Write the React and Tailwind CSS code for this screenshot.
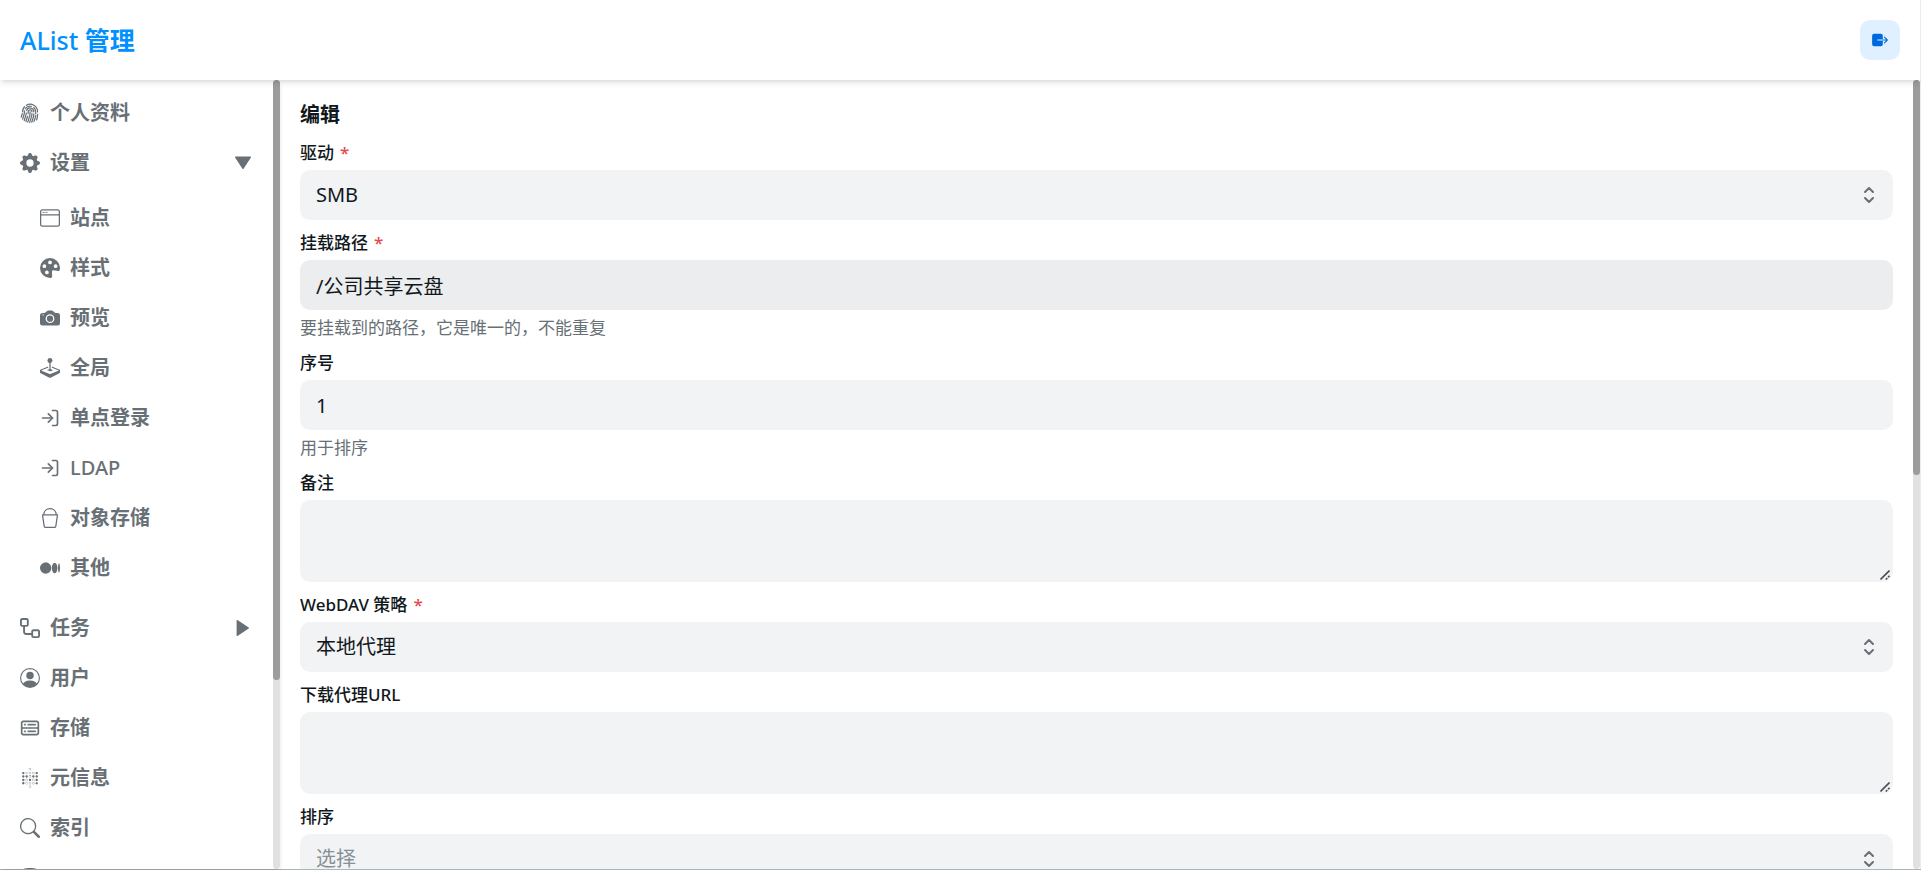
import {
  BsBucket,
  BsCameraFill,
  BsFingerprint,
  BsGearFill,
  BsJoystick,
  BsMedium,
  BsPaletteFill,
  BsPersonCircle,
  BsSearch,
  BsWindow,
} from "react-icons/bs";
import { CgDatabase } from "react-icons/cg";
import { FaDatabase } from "react-icons/fa";
import { FiLogIn } from "react-icons/fi";
import { IoExit } from "react-icons/io5";
import { SiMetabase } from "react-icons/si";
import { TbSelector } from "react-icons/tb";

const WorkflowIcon = ({ size, className }) => (
  <svg
    viewBox="0 0 16 16"
    width={size}
    height={size}
    className={className}
    fill="currentColor"
    aria-hidden="true"
  >
    <path d="M0 1.75C0 .784.784 0 1.75 0h3.5C6.216 0 7 .784 7 1.75v3.5A1.75 1.75 0 0 1 5.25 7H4v4a1 1 0 0 0 1 1h4v-1.25C9 9.784 9.784 9 10.75 9h3.5c.966 0 1.75.784 1.75 1.75v3.5A1.75 1.75 0 0 1 14.25 16h-3.5A1.75 1.75 0 0 1 9 14.25v-.75H5A2.5 2.5 0 0 1 2.5 11V7h-.75A1.75 1.75 0 0 1 0 5.25Zm1.75-.25a.25.25 0 0 0-.25.25v3.5c0 .138.112.25.25.25h3.5a.25.25 0 0 0 .25-.25v-3.5a.25.25 0 0 0-.25-.25Zm9 9a.25.25 0 0 0-.25.25v3.5c0 .138.112.25.25.25h3.5a.25.25 0 0 0 .25-.25v-3.5a.25.25 0 0 0-.25-.25Z" />
  </svg>
);

const Caret = ({ open }) => (
  <svg
    viewBox="0 0 16 16"
    className={`size-4 ${open ? "" : "-rotate-90"}`}
    fill="currentColor"
    aria-hidden="true"
  >
    <path d="M.6 1.6h14.8c.6 0 .8.5.5.9L8.6 13.7c-.3.4-.9.4-1.2 0L.1 2.5c-.3-.4-.1-.9.5-.9z" />
  </svg>
);

const menu = [
  { title: "个人资料", icon: BsFingerprint },
  {
    title: "设置",
    icon: BsGearFill,
    open: true,
    children: [
      { title: "站点", icon: BsWindow },
      { title: "样式", icon: BsPaletteFill },
      { title: "预览", icon: BsCameraFill },
      { title: "全局", icon: BsJoystick },
      { title: "单点登录", icon: FiLogIn },
      { title: "LDAP", icon: FiLogIn, latin: true },
      { title: "对象存储", icon: BsBucket },
      { title: "其他", icon: BsMedium },
    ],
  },
  { title: "任务", icon: WorkflowIcon, children: [] },
  { title: "用户", icon: BsPersonCircle },
  { title: "存储", icon: CgDatabase },
  { title: "元信息", icon: SiMetabase },
  { title: "索引", icon: BsSearch },
  { title: "备份", icon: FaDatabase, iconOnly: true },
];

const fields = [
  { id: "driver", label: "驱动", type: "select", value: "SMB", required: true },
  {
    id: "mount_path",
    label: "挂载路径",
    type: "text",
    value: "/公司共享云盘",
    required: true,
    help: "要挂载到的路径，它是唯一的，不能重复",
    active: true,
  },
  { id: "order", label: "序号", type: "text", value: "1", help: "用于排序" },
  { id: "remark", label: "备注", type: "textarea" },
  {
    id: "webdav_policy",
    label: "WebDAV 策略",
    type: "select",
    value: "本地代理",
    required: true,
  },
  { id: "down_proxy_url", label: "下载代理URL", type: "textarea" },
  { id: "order_by", label: "排序", type: "select", placeholder: "选择" },
];

const MenuItem = ({ item }) => {
  const Icon = item.icon;
  const content = (
    <>
      <Icon size={20} className="shrink-0" />
      {!item.iconOnly && (
        <span className={item.latin ? "font-medium" : ""}>{item.title}</span>
      )}
    </>
  );

  if (!item.children) {
    return (
      <li>
        <a
          href="#"
          aria-label={item.title}
          className="flex h-[50px] items-center gap-[10px] px-5"
        >
          {content}
        </a>
      </li>
    );
  }

  return (
    <li>
      <button
        type="button"
        aria-expanded={!!item.open}
        className="flex h-[50px] w-full items-center gap-[10px] px-5 text-left"
      >
        {content}
        <span className="ml-auto pr-[2px]">
          <Caret open={item.open} />
        </span>
      </button>
      {item.open && (
        <ul className="pt-[5px] pb-[10px] pl-5">
          {item.children.map((child) => (
            <MenuItem key={child.title} item={child} />
          ))}
        </ul>
      )}
    </li>
  );
};

const ScrollTrack = ({ size }) => (
  <div className="w-[7px] shrink-0 rounded bg-[#e1e1e1]">
    <div className="rounded bg-[#9c9c9c]" style={{ height: size }}></div>
  </div>
);

const Control = ({ field }) => {
  if (field.type === "select") {
    return (
      <div className="relative">
        <select
          id={field.id}
          required={field.required}
          className={`block h-[50px] w-full appearance-none rounded-[10px] bg-[#f1f3f5] px-4 outline-none ${
            field.value ? "" : "text-[#889096]"
          }`}
        >
          <option>{field.value || field.placeholder}</option>
        </select>
        <TbSelector
          size={24}
          className="pointer-events-none absolute top-[13px] right-3 text-[#687076]"
        />
      </div>
    );
  }
  if (field.type === "textarea") {
    return (
      <div className="relative">
        <textarea
          id={field.id}
          className="block h-[82px] w-full resize-none rounded-[10px] bg-[#f1f3f5] px-4 py-2 outline-none"
        />
        <svg
          viewBox="0 0 10 10"
          className="pointer-events-none absolute right-[3px] bottom-[2px] size-[10px] text-[#4c5054]"
          fill="none"
          stroke="currentColor"
          strokeWidth="1.6"
          aria-hidden="true"
        >
          <path d="M.5 9.5l9-9M5.8 9.5l1.5-1.5M8 7.3l1.5-1.5" />
        </svg>
      </div>
    );
  }
  return (
    <input
      id={field.id}
      type="text"
      required={field.required}
      defaultValue={field.value}
      className={`block h-[50px] w-full rounded-[10px] px-4 outline-none ${
        field.active ? "bg-[#ecedef]" : "bg-[#f1f3f5]"
      }`}
    />
  );
};

const Field = ({ field }) => (
  <div className="flex flex-col gap-[5px]">
    <label htmlFor={field.id} className="text-[17px] leading-[25px] font-medium">
      {field.label}
      {field.required && <span className="ml-[6px] text-[#e5484d]">*</span>}
    </label>
    <Control field={field} />
    {field.help && (
      <p className="text-[17px] leading-[25px] text-[#687076]">{field.help}</p>
    )}
  </div>
);

const App = () => {
  return (
    <div className="flex h-screen flex-col border-b border-[#a9b6b8] bg-white font-['Noto_Sans','Noto_Sans_CJK_SC',sans-serif] text-[20px] leading-[30px] text-[#11181c]">
      <header className="z-10 flex h-20 shrink-0 items-center justify-between border-r border-[#ececec] bg-white px-5 shadow-md">
        <h1 className="text-[25px] font-semibold text-[#0091ff]">
          <span className="font-medium">AList</span> 管理
        </h1>
        <button
          type="button"
          aria-label="退出"
          className="flex size-10 items-center justify-center rounded-[10px] bg-[#e1f0ff] text-[#006adc]"
        >
          <IoExit size={18} />
        </button>
      </header>

      <div className="flex min-h-0 flex-1">
        <aside className="flex w-[280px] shrink-0 shadow-md">
          <nav className="flex-1 overflow-hidden pt-2 font-semibold text-[#687076]">
            <ul>
              {menu.map((item) => (
                <MenuItem key={item.title} item={item} />
              ))}
            </ul>
          </nav>
          <ScrollTrack size="76%" />
        </aside>

        <main className="flex-1 overflow-hidden p-5">
          <form className="flex flex-col gap-[10px]">
            <h2 className="font-bold">编辑</h2>
            {fields.map((field) => (
              <Field key={field.id} field={field} />
            ))}
          </form>
        </main>
        <div className="flex border-r border-[#ececec]">
          <ScrollTrack size="50%" />
        </div>
      </div>
    </div>
  );
};

export default App;
